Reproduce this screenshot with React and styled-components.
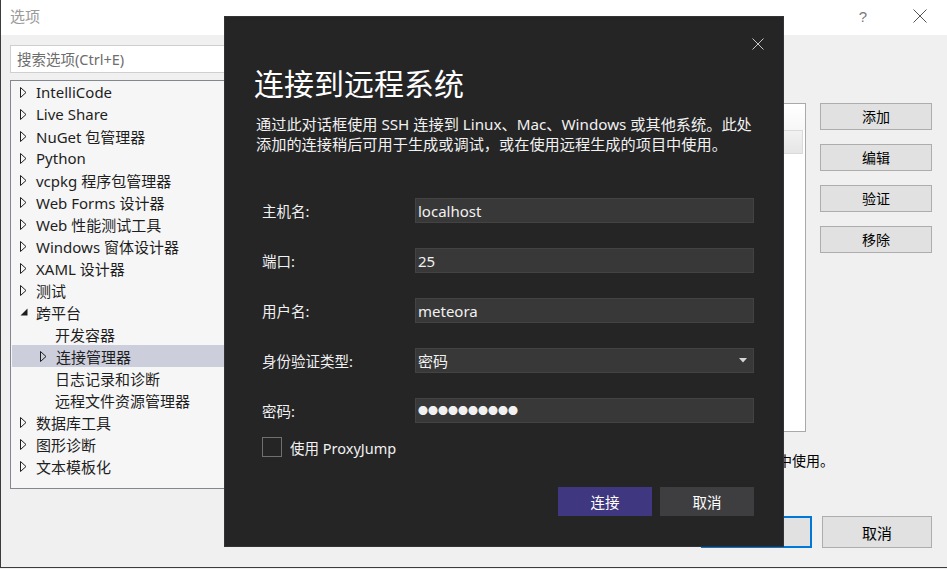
import React from "react";
import styled, { createGlobalStyle } from "styled-components";

const GlobalStyle = createGlobalStyle`
  html, body {
    margin: 0;
    padding: 0;
    background: #f0f0f0;
  }
  body {
    font-family: "Noto Sans", "Noto Sans CJK SC", sans-serif;
  }
  * {
    box-sizing: border-box;
  }
`;

const treeItems = [
  { label: "IntelliCode", level: 0, arrow: "closed" },
  { label: "Live Share", level: 0, arrow: "closed" },
  { label: "NuGet 包管理器", level: 0, arrow: "closed" },
  { label: "Python", level: 0, arrow: "closed" },
  { label: "vcpkg 程序包管理器", level: 0, arrow: "closed" },
  { label: "Web Forms 设计器", level: 0, arrow: "closed" },
  { label: "Web 性能测试工具", level: 0, arrow: "closed" },
  { label: "Windows 窗体设计器", level: 0, arrow: "closed" },
  { label: "XAML 设计器", level: 0, arrow: "closed" },
  { label: "测试", level: 0, arrow: "closed" },
  { label: "跨平台", level: 0, arrow: "open" },
  { label: "开发容器", level: 1, arrow: "none" },
  { label: "连接管理器", level: 1, arrow: "closed", selected: true },
  { label: "日志记录和诊断", level: 1, arrow: "none" },
  { label: "远程文件资源管理器", level: 1, arrow: "none" },
  { label: "数据库工具", level: 0, arrow: "closed" },
  { label: "图形诊断", level: 0, arrow: "closed" },
  { label: "文本模板化", level: 0, arrow: "closed" },
];

const fields = [
  { label: "主机名:", value: "localhost" },
  { label: "端口:", value: "25" },
  { label: "用户名:", value: "meteora" },
  { label: "身份验证类型:", value: "密码", select: true },
  { label: "密码:", value: "●●●●●●●●●●", secret: true },
];

function Arrow({ kind }) {
  if (kind === "open") {
    return (
      <svg width="8" height="8" viewBox="0 0 8 8">
        <polygon points="7.5,0.5 7.5,7.5 0.5,7.5" fill="#1e1e1e" />
      </svg>
    );
  }
  if (kind === "closed") {
    return (
      <svg width="7" height="11" viewBox="0 0 7 11">
        <polygon
          points="0.5,0.5 6,5.5 0.5,10.5"
          fill="none"
          stroke="#1e1e1e"
          strokeWidth="1"
        />
      </svg>
    );
  }
  return null;
}

function CloseGlyph({ size, color }) {
  return (
    <svg width={size} height={size} viewBox={`0 0 ${size} ${size}`}>
      <line x1="0.5" y1="0.5" x2={size - 0.5} y2={size - 0.5} stroke={color} strokeWidth="1" />
      <line x1={size - 0.5} y1="0.5" x2="0.5" y2={size - 0.5} stroke={color} strokeWidth="1" />
    </svg>
  );
}

export default function App() {
  return (
    <>
      <GlobalStyle />
      <Window>
        <TitleBar>
          <WindowTitle>选项</WindowTitle>
          <TitleControls>
            <HelpMark>?</HelpMark>
            <CloseGlyph size={14} color="#555" />
          </TitleControls>
        </TitleBar>

        <Body>
          <TopRow>
            <LeftCol>
              <Search>搜索选项(Ctrl+E)</Search>
              <Tree>
                {treeItems.map((item) => (
                  <TreeRow key={item.label} $level={item.level} $selected={item.selected}>
                    <ArrowSlot>
                      <Arrow kind={item.arrow} />
                    </ArrowSlot>
                    <span>{item.label}</span>
                  </TreeRow>
                ))}
              </Tree>
            </LeftCol>

            <MidCol>
              <ListBox>
                <ListTop />
                <ListHeader />
              </ListBox>
              <Note>这些连接可用于远程生成，也可在远程项目中使用。</Note>
            </MidCol>

            <RightCol>
              <SideButton>添加</SideButton>
              <SideButton>编辑</SideButton>
              <SideButton>验证</SideButton>
              <SideButton>移除</SideButton>
            </RightCol>
          </TopRow>

          <Footer>
            <FooterButton $primary>确定</FooterButton>
            <FooterButton>取消</FooterButton>
          </Footer>
        </Body>

        <Dialog>
          <DialogClose>
            <CloseGlyph size={12} color="#c8c8c8" />
          </DialogClose>
          <DialogTitle>连接到远程系统</DialogTitle>
          <DialogText>
            通过此对话框使用 SSH 连接到 Linux、Mac、Windows 或其他系统。此处
            <br />
            添加的连接稍后可用于生成或调试，或在使用远程生成的项目中使用。
          </DialogText>

          <Form>
            {fields.map((f) => (
              <React.Fragment key={f.label}>
                <FieldLabel>{f.label}</FieldLabel>
                <Input $secret={f.secret}>
                  <span>{f.value}</span>
                  {f.select && (
                    <svg width="8" height="5" viewBox="0 0 8 5">
                      <polygon points="0,0 8,0 4,4.5" fill="#d6d6d6" />
                    </svg>
                  )}
                </Input>
              </React.Fragment>
            ))}
          </Form>

          <CheckRow>
            <CheckBox />
            <span>使用 ProxyJump</span>
          </CheckRow>

          <DialogActions>
            <DialogButton $primary>连接</DialogButton>
            <DialogButton>取消</DialogButton>
          </DialogActions>
        </Dialog>
      </Window>
    </>
  );
}

const Window = styled.div`
  position: relative;
  width: 947px;
  height: 568px;
  border-left: 1px solid #3c3c3c;
  border-bottom: 1px solid #3c3c3c;
  background: #f0f0f0;
  overflow: hidden;
`;

const TitleBar = styled.div`
  height: 35px;
  background: #ffffff;
  display: flex;
  align-items: center;
  justify-content: space-between;
  padding: 0 20px 0 9px;
`;

const WindowTitle = styled.div`
  font-size: 15px;
  color: #9a9a9a;
  line-height: 20px;
  margin-top: -3px;
`;

const TitleControls = styled.div`
  display: flex;
  align-items: center;
  gap: 46px;
  margin-top: -3px;
`;

const HelpMark = styled.div`
  font-family: "Liberation Sans", sans-serif;
  font-size: 15px;
  color: #7a7a7a;
`;

const Body = styled.div`
  display: flex;
  flex-direction: column;
  height: 532px;
  padding: 10px 15px 0 9px;
`;

const TopRow = styled.div`
  display: flex;
  height: 471px;
`;

const LeftCol = styled.div`
  width: 231px;
  display: flex;
  flex-direction: column;
  gap: 7px;
`;

const Search = styled.div`
  height: 28px;
  background: #ffffff;
  border: 1px solid #cfcfcf;
  padding: 0 0 1px 6px;
  font-size: 14.5px;
  color: #6d6d6d;
  display: flex;
  align-items: center;
`;

const Tree = styled.div`
  height: 409px;
  background: #f6f6f6;
  border: 1px solid #828790;
  padding: 0 1px 0 0;
`;

const TreeRow = styled.div`
  height: 22px;
  display: flex;
  align-items: center;
  padding-left: ${(p) => 9 + p.$level * 19}px;
  margin-left: ${(p) => (p.$selected ? 1 : 0)}px;
  background: ${(p) => (p.$selected ? "#cccedb" : "transparent")};
  font-size: 15px;
  color: #1e1e1e;
  white-space: nowrap;
`;

const ArrowSlot = styled.span`
  width: 16px;
  display: inline-flex;
  align-items: center;
`;

const MidCol = styled.div`
  flex: 1;
  margin-left: 10px;
  padding-top: 58px;
  display: flex;
  flex-direction: column;
`;

const ListBox = styled.div`
  height: 329px;
  background: #ffffff;
  border: 1px solid #a9a9a9;
  display: flex;
  flex-direction: column;
`;

const ListTop = styled.div`
  height: 26px;
  background: linear-gradient(#ffffff, #f7f7f7);
`;

const ListHeader = styled.div`
  height: 24px;
  margin-right: 2px;
  background: linear-gradient(#f2f2f2, #e6e6e6);
  border: 1px solid #dadada;
`;

const Note = styled.div`
  margin-top: 19px;
  margin-right: -28px;
  text-align: right;
  font-size: 14px;
  line-height: 20px;
  color: #000000;
  white-space: nowrap;
`;

const RightCol = styled.div`
  width: 112px;
  margin-left: 14px;
  padding-top: 58px;
  display: flex;
  flex-direction: column;
  gap: 14px;
`;

const SideButton = styled.div`
  height: 27px;
  background: #e1e1e1;
  border: 1px solid #adadad;
  display: flex;
  align-items: center;
  justify-content: center;
  padding-bottom: 1px;
  font-size: 14px;
  color: #000000;
`;

const Footer = styled.div`
  display: flex;
  justify-content: flex-end;
  gap: 10px;
`;

const FooterButton = styled.div`
  width: ${(p) => (p.$primary ? 111 : 110)}px;
  height: 32px;
  background: #e1e1e1;
  border: ${(p) => (p.$primary ? "2px solid #0078d7" : "1px solid #adadad")};
  display: flex;
  align-items: center;
  justify-content: center;
  font-size: 15px;
  color: #000000;
`;

const Dialog = styled.div`
  position: absolute;
  left: 223px;
  top: 16px;
  width: 560px;
  height: 531px;
  background: #252526;
  border: 1px solid #333337;
  padding: 47px 29px 0 31px;
  color: #f1f1f1;
  display: flex;
  flex-direction: column;
`;

const DialogClose = styled.div`
  position: absolute;
  top: 21px;
  right: 19px;
  display: flex;
`;

const DialogTitle = styled.div`
  font-size: 30px;
  line-height: 40px;
  margin-left: -2px;
  color: #ffffff;
  white-space: nowrap;
`;

const DialogText = styled.div`
  margin-top: 10px;
  font-size: 15.2px;
  line-height: 20px;
  white-space: nowrap;
  color: #f1f1f1;
`;

const Form = styled.div`
  margin-top: 44px;
  padding-left: 6px;
  display: grid;
  grid-template-columns: 153px 339px;
  grid-auto-rows: 25px;
  row-gap: 25px;
`;

const FieldLabel = styled.div`
  display: flex;
  align-items: center;
  font-size: 14.5px;
  color: #f1f1f1;
`;

const Input = styled.div`
  background: #383838;
  border: 1px solid #434343;
  display: flex;
  align-items: center;
  justify-content: space-between;
  padding: 0 6px 0 2px;
  font-size: ${(p) => (p.$secret ? "10px" : "15px")};
  color: #f1f1f1;
  white-space: nowrap;
`;

const CheckRow = styled.div`
  margin-top: 14px;
  padding-left: 6px;
  display: flex;
  align-items: center;
  gap: 8px;
  font-size: 14.5px;
  color: #f1f1f1;
  height: 20px;
`;

const CheckBox = styled.div`
  width: 20px;
  height: 20px;
  border: 1px solid #707070;
  background: transparent;
`;

const DialogActions = styled.div`
  margin-top: 30px;
  display: flex;
  justify-content: flex-end;
  gap: 8px;
`;

const DialogButton = styled.div`
  width: 94px;
  height: 29px;
  background: ${(p) => (p.$primary ? "#3f3880" : "#3e3e40")};
  display: flex;
  align-items: center;
  justify-content: center;
  font-size: 14.5px;
  color: #ffffff;
`;
